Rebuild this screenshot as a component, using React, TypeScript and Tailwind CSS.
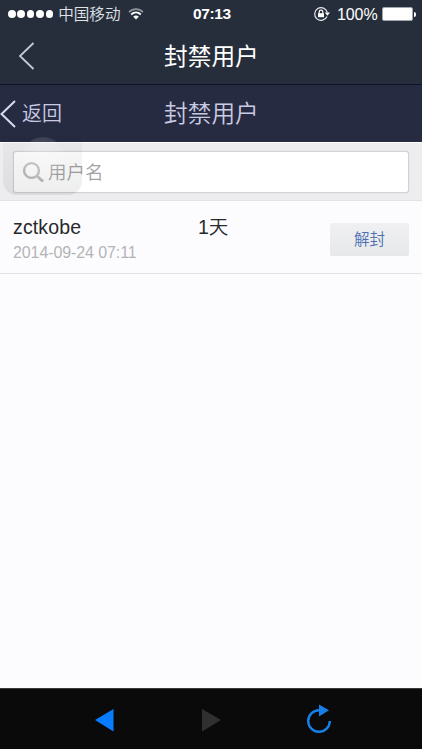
const signalDots = [0, 1, 2, 3, 4];

const bans = [
  { name: "zctkobe", date: "2014-09-24 07:11", duration: "1天" },
];

const StatusBar = () => (
  <div className="flex h-7 shrink-0 items-center text-white">
    <div className="flex w-[193px] items-center pl-2">
      <div className="flex gap-[1.8px]">
        {signalDots.map((dot) => (
          <span key={dot} className="size-[7.6px] rounded-full bg-white" />
        ))}
      </div>
      <span className="ml-[5px] pt-0.5 text-[15.6px] leading-[26px] font-[350] text-[#dfe3e9]">中国移动</span>
      <svg className="ml-[7px]" width="16" height="12" viewBox="0 0 16 12" fill="none">
        <path d="M1 4.1C5 .1 11 .1 15 4.1" stroke="#8d949e" strokeWidth="1.6" />
        <path d="M3.2 6.5c2.8-2.7 6.8-2.7 9.6 0" stroke="#fff" strokeWidth="1.8" />
        <path d="M8 11.5 5.2 8.7c1.6-1.5 4-1.5 5.6 0Z" fill="#fff" />
      </svg>
    </div>
    <span className="w-[120px] text-[15.5px] font-bold tracking-[-0.4px]">07:13</span>
    <svg width="17" height="16" viewBox="0 0 17 16" fill="none">
      <path d="M14 10.4A6.4 6.4 0 1 1 14.3 6.5" stroke="#e4e8ee" strokeWidth="1.2" />
      <path d="M11.8 6.6H17l-2.6 3.2Z" fill="#fff" />
      <path d="M5 7.2h6v4H5Z" fill="#fff" />
      <path d="M6.2 7.5V6a1.8 1.8 0 0 1 3.6 0v1.5" stroke="#fff" strokeWidth="1.2" />
    </svg>
    <span className="ml-[7px] w-[45px] pt-px text-[16px] tracking-[-0.1px]">100%</span>
    <div className="flex items-center gap-px">
      <div className="h-[14px] w-[31px] rounded-[2px] border border-[#a2a6ad] bg-white" />
      <div className="h-[5px] w-[2px] rounded-r-full bg-white" />
    </div>
  </div>
);

const SearchBar = () => (
  <div className="relative h-[58px] shrink-0 border-b border-[#e2e2e5] bg-[#ededf0] px-[13px] pt-2">
    <div className="flex h-[42px] w-[396px] items-center rounded-[3px] border border-[#d2d2d5] bg-white pl-2 shadow-[0_0_1px_#c4c4c8]">
      <svg className="mt-px" width="23" height="23" viewBox="0 0 23 23" fill="none" stroke="#bdbdbf" strokeWidth="2.4">
        <circle cx="9.5" cy="9.5" r="7.4" />
        <path d="m15 15 6 5.5" strokeWidth="3" />
      </svg>
      <span className="ml-[3px] pt-0.5 text-[18.5px] font-[350] text-[#a3a3a5]">用户名</span>
    </div>
    {/* translucent assistive button floating over the page */}
    <div className="absolute -top-2 left-[3px] h-[60px] w-[79px] overflow-hidden rounded-b-[14px] bg-linear-to-b from-black/2 to-black/7">
      <div className="absolute top-0.5 left-[19px] size-[42px] rounded-full bg-radial from-white/25 to-white/4" />
    </div>
  </div>
);

export default function App() {
  return (
    <div className="flex h-[750px] w-[422px] flex-col overflow-hidden bg-[#fcfcfe] font-['Liberation_Sans','Noto_Sans_CJK_SC',sans-serif]">
      <header className="h-[85px] shrink-0 border-b border-[#111322] bg-[#272e3b]">
        <StatusBar />
        <div className="flex h-14 items-center">
          <svg className="ml-[18px]" width="18" height="28" viewBox="0 0 18 28" fill="none" stroke="#c6cad6" strokeWidth="1.8">
            <path d="M15.5 1 2 14l13.5 13" />
          </svg>
          <h1 className="ml-[128px] pt-[3px] text-[23.7px] leading-none font-normal text-white">封禁用户</h1>
        </div>
      </header>

      <div className="flex h-[57px] shrink-0 items-center bg-[#272b42] text-[#c8cbe2]">
        <svg width="17" height="28" viewBox="0 0 17 28" fill="none" stroke="#d8dcf0" strokeWidth="2">
          <path d="M15 1 1.5 14 15 27" />
        </svg>
        <span className="ml-[5px] w-[142px] text-[20px] leading-none font-[350]">返回</span>
        <h2 className="pt-[3px] text-[23.7px] leading-none font-[350]">封禁用户</h2>
      </div>
      <div className="h-px shrink-0 bg-white" />

      <SearchBar />

      <main className="min-h-0 flex-1">
        {bans.map((ban) => (
          <div key={ban.name} className="flex h-[73px] items-start border-b border-[#e4e4e7] pl-[13px]">
            <div className="w-[185px] pt-[14px]">
              <div className="text-[19.5px] leading-6 tracking-[0.15px] text-[#29292b]">{ban.name}</div>
              <div className="mt-0.5 text-[16px] leading-6 tracking-[-0.1px] text-[#b4b4b6]">{ban.date}</div>
            </div>
            <div className="w-[132px] pt-[14px] text-[19.5px] leading-6 font-[350] text-[#29292b]">{ban.duration}</div>
            <button className="mt-[22px] h-[33px] w-[79px] rounded-[2px] bg-linear-to-b from-[#f0f0f2] to-[#e6e8ea] text-[15.5px] font-[350] text-[#4d70b3]">
              解封
            </button>
          </div>
        ))}
      </main>

      <footer className="flex h-[62px] shrink-0 items-center border-t border-b border-t-[#3a3a3a] border-b-white bg-[#0a0a0b]">
        <svg className="mt-0.5 ml-[95px]" width="19" height="24" viewBox="0 0 19 24">
          <path d="M18.5 1v22.5L0 12Z" fill="#087cff" />
        </svg>
        <svg className="mt-0.5 ml-[87px]" width="20" height="24" viewBox="0 0 20 24">
          <path d="M1 1v22.5L20 12Z" fill="#303030" />
        </svg>
        <svg className="ml-[85px]" width="26" height="30" viewBox="0 0 26 30" fill="none">
          <path d="M13 6.2a10.8 10.8 0 1 0 10.8 10.8" stroke="#177fe8" strokeWidth="2.4" />
          <path d="M13 .5v12L23 6.3Z" fill="#177fe8" />
        </svg>
      </footer>
    </div>
  );
}
